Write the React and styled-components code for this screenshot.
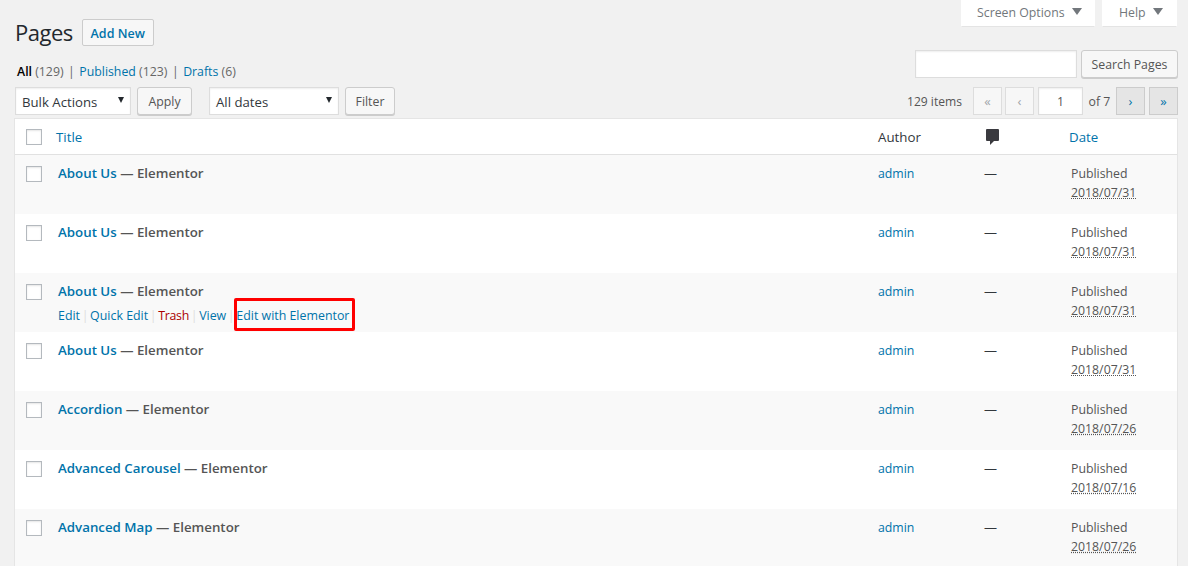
import styled, { createGlobalStyle } from 'styled-components'

const GlobalStyle = createGlobalStyle`
  html, body {
    margin: 0;
    padding: 0;
    background: #f1f1f1;
    overflow: hidden;
  }
  body {
    font-family: "Open Sans", "Noto Sans", sans-serif;
    font-size: 12.3px;
    color: #444;
  }
  * { box-sizing: border-box; }
`

const Page = styled.div`
  width: 1188px;
  height: 566px;
  padding: 0 10px 0 15px;
  overflow: hidden;
`

const Top = styled.div`
  display: flex;
  justify-content: space-between;
  height: 87px;
`

const TopLeft = styled.div`
  padding-top: 19px;
`

const TopRight = styled.div`
  display: flex;
  flex-direction: column;
  align-items: flex-end;
  gap: 24px;
`

const Tabs = styled.div`
  display: flex;
  gap: 7px;
  margin-right: 1px;
`

const Tab = styled.div`
  width: ${p => p.$w}px;
  height: 26px;
  padding: 0 0 1px ${p => p.$pl}px;
  display: flex;
  align-items: center;
  gap: 7px;
  background: #fff;
  color: #72777c;
  box-shadow: 0 1px 1px -1px rgba(0, 0, 0, 0.3);
`

const Caret = styled.span`
  width: 0;
  height: 0;
  border-left: 5px solid transparent;
  border-right: 5px solid transparent;
  border-top: 7px solid #72777c;
  margin-top: -3px;
`

const Heading = styled.div`
  display: flex;
  align-items: center;
  gap: 9px;
`

const Title = styled.h1`
  margin: 0;
  font-size: 22px;
  font-weight: 400;
  line-height: 27px;
  letter-spacing: -0.5px;
  color: #23282d;
`

const Button = styled.button`
  width: ${p => p.$w}px;
  height: 28px;
  padding: 0;
  font: inherit;
  color: #555;
  background: #f7f7f7;
  border: 1px solid #ccc;
  border-radius: 3px;
  box-shadow: 0 1px 0 #ccc;
`

const AddNew = styled.a`
  width: 72px;
  height: 27px;
  padding-top: 1px;
  display: flex;
  align-items: center;
  justify-content: center;
  font-size: 12.5px;
  font-weight: 600;
  color: #0073aa;
  background: #f7f7f7;
  border: 1px solid #ccc;
  border-radius: 2px;
`

const Views = styled.div`
  display: flex;
  padding-left: 2px;
  margin-top: 16px;
  line-height: 20px;
  color: #666;
`

const Sep = styled.span`
  margin: 0 4.5px;
  color: #666;
`

const Current = styled.span`
  color: #000;
  font-weight: 600;
`

const Link = styled.a`
  color: #0073aa;
`

const HeadLink = styled(Link)`
  font-size: 13.3px;
`

const Search = styled.div`
  display: flex;
  gap: 4px;
`

const TextInput = styled.input`
  width: ${p => p.$w}px;
  height: 28px;
  margin-left: ${p => p.$ml || 0}px;
  border: 1px solid #ddd;
  background: #fff;
  font: inherit;
  color: #555;
  text-align: center;
  box-shadow: inset 0 1px 2px rgba(0, 0, 0, 0.07);
  outline: none;
  padding: 0;
`

const Nav = styled.div`
  display: flex;
  justify-content: space-between;
  align-items: center;
  height: 28px;
  margin-bottom: 4px;
`

const Group = styled.div`
  display: flex;
  align-items: center;
`

const Select = styled.div`
  width: ${p => p.$w}px;
  height: 28px;
  margin-right: 6px;
  padding: 1px 7px 0 6px;
  display: flex;
  align-items: center;
  justify-content: space-between;
  background: #fff;
  border: 1px solid #ddd;
  font-size: 13.2px;
  color: #32373c;
  box-shadow: inset 0 1px 2px rgba(0, 0, 0, 0.07);
`

const SelectCaret = styled.span`
  width: 0;
  height: 0;
  margin-right: -1px;
  margin-top: -3px;
  border-left: 3.5px solid transparent;
  border-right: 3.5px solid transparent;
  border-top: 6px solid #23282d;
`

const FilterButton = styled(Button)`
  margin-right: ${p => p.$mr || 0}px;
`

const Count = styled.span`
  margin-right: 11px;
  font-size: 12.1px;
  color: #555;
`

const PageButton = styled.span`
  width: 29px;
  height: 28px;
  display: flex;
  align-items: center;
  justify-content: center;
  font-size: 13px;
  border: 1px solid ${p => (p.$active ? '#ccc' : '#ddd')};
  background: ${p => (p.$active ? '#e5e5e5' : '#f7f7f7')};
  color: ${p => (p.$active ? '#0073aa' : '#a0a5aa')};
  margin-left: ${p => p.$ml || 0}px;
`

const Of = styled.span`
  width: 33px;
  text-align: center;
  color: #555;
`

const Table = styled.div`
  width: 1162px;
  background: #fff;
  box-shadow: 0 0 0 1px #e5e5e5;
`

const Row = styled.div`
  display: grid;
  grid-template-columns: 41px 822px 107px 84px 1fr;
  background: ${p => (p.$alt ? '#f9f9f9' : '#fff')};
  height: 59px;
  padding-top: 8px;
  line-height: 20px;
`

const HeaderRow = styled(Row)`
  height: 36px;
  padding-top: 0;
  align-items: center;
  background: #fff;
  border-bottom: 1px solid #e1e1e1;
  font-size: 13.3px;
  color: #32373c;
`

const Check = styled.span`
  display: block;
  width: 16px;
  height: 16px;
  margin: 3px 0 0 11px;
  background: #fff;
  border: 1px solid #b4b9be;
  box-shadow: inset 0 1px 2px rgba(0, 0, 0, 0.1);
`

const HeadCheck = styled(Check)`
  margin-top: 0;
`

const TitleCell = styled.div`
  padding-left: 2px;
  font-size: 13.3px;
  font-weight: 600;
  color: #555;
`

const TitleLink = styled.a`
  color: #0073aa;
`

const Actions = styled.div`
  display: flex;
  margin-top: 5px;
  font-size: 12.4px;
  font-weight: 400;
  color: #ddd;
`

const Action = styled.a`
  position: relative;
  color: ${p => (p.$red ? '#a00' : '#0073aa')};
  letter-spacing: ${p => (p.$red ? '-0.3px' : '0')};
`

const Highlight = styled.span`
  position: absolute;
  left: -2px;
  top: -8px;
  width: 121px;
  height: 33px;
  border: 3px solid #f00;
  border-radius: 2px;
`

const ActionSep = styled.span`
  margin: 0 1.65px;
`

const Author = styled.a`
  padding-top: 1px;
  color: #0073aa;
`

const Dash = styled.span`
  margin-left: -1px;
  font-size: 13px;
  color: #32373c;
`

const DateCell = styled.div`
  padding: 1px 0 0 2px;
  line-height: 19px;
  color: #555;
`

const DateText = styled.abbr`
  text-decoration: underline dotted;
`

const CommentSvg = styled.svg`
  margin: 1px 0 0 1px;
  display: block;
`

const rows = [
  { name: 'About Us', date: '2018/07/31' },
  { name: 'About Us', date: '2018/07/31' },
  { name: 'About Us', date: '2018/07/31', actions: true },
  { name: 'About Us', date: '2018/07/31' },
  { name: 'Accordion', date: '2018/07/26' },
  { name: 'Advanced Carousel', date: '2018/07/16' },
  { name: 'Advanced Map', date: '2018/07/26' },
]

const CommentIcon = () => (
  <CommentSvg width="13" height="17" viewBox="0 0 13 17">
    <path d="M1 0h11a1 1 0 0 1 1 1v10a1 1 0 0 1-1 1H8l-4 4v-4H1a1 1 0 0 1-1-1V1a1 1 0 0 1 1-1z" fill="#3a3a3f" />
  </CommentSvg>
)

const App = () => {
  return (
    <Page>
      <GlobalStyle />
      <Top>
        <TopLeft>
          <Heading>
            <Title>Pages</Title>
            <AddNew>Add New</AddNew>
          </Heading>
          <Views>
            <Current>All</Current>&nbsp;(129)<Sep>|</Sep>
            <Link>Published</Link>&nbsp;(123)<Sep>|</Sep>
            <Link>Drafts</Link>&nbsp;(6)
          </Views>
        </TopLeft>
        <TopRight>
          <Tabs>
            <Tab $w={134} $pl={16}>Screen Options <Caret /></Tab>
            <Tab $w={75} $pl={17}>Help <Caret /></Tab>
          </Tabs>
          <Search>
            <TextInput $w={162} />
            <Button $w={97}>Search Pages</Button>
          </Search>
        </TopRight>
      </Top>
      <Nav>
        <Group>
          <Select $w={116}>Bulk Actions <SelectCaret /></Select>
          <FilterButton $w={55} $mr={17}>Apply</FilterButton>
          <Select $w={130}>All dates <SelectCaret /></Select>
          <FilterButton $w={50}>Filter</FilterButton>
        </Group>
        <Group>
          <Count>129 items</Count>
          <PageButton>«</PageButton>
          <PageButton $ml={3}>‹</PageButton>
          <TextInput $w={45} $ml={4} defaultValue="1" />
          <Of>of 7</Of>
          <PageButton $active>›</PageButton>
          <PageButton $active $ml={4}>»</PageButton>
        </Group>
      </Nav>
      <Table>
        <HeaderRow>
          <HeadCheck />
          <HeadLink>Title</HeadLink>
          <span>Author</span>
          <CommentIcon />
          <HeadLink>Date</HeadLink>
        </HeaderRow>
        {rows.map((row, i) => (
          <Row key={i} $alt={i % 2 === 0}>
            <Check />
            <TitleCell>
              <TitleLink>{row.name}</TitleLink> — Elementor
              {row.actions && (
                <Actions>
                  <Action>Edit</Action><ActionSep>|</ActionSep>
                  <Action>Quick Edit</Action><ActionSep>|</ActionSep>
                  <Action $red>Trash</Action><ActionSep>|</ActionSep>
                  <Action>View</Action><ActionSep>|</ActionSep>
                  <Action>Edit with Elementor<Highlight /></Action>
                </Actions>
              )}
            </TitleCell>
            <Author>admin</Author>
            <Dash>—</Dash>
            <DateCell>Published<br /><DateText>{row.date}</DateText></DateCell>
          </Row>
        ))}
      </Table>
    </Page>
  )
}

export default App
